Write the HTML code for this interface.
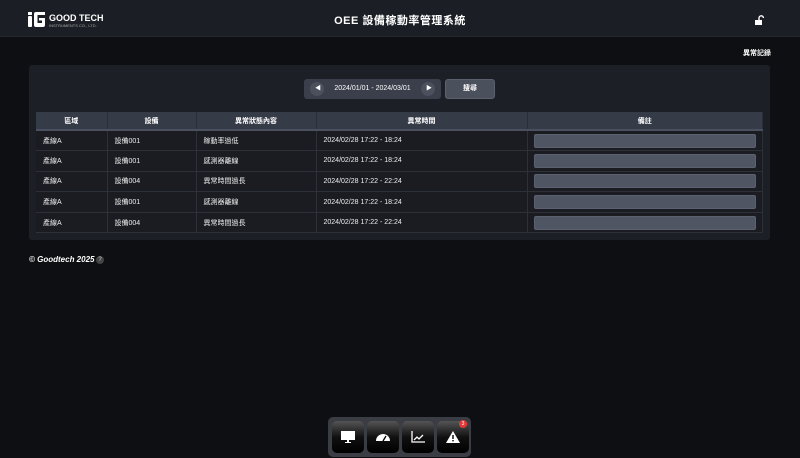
<!DOCTYPE html>
<html><head><meta charset="utf-8"><style>
*{margin:0;padding:0;box-sizing:border-box}
body{width:800px;height:458px;background:#0e0f12;font-family:"Liberation Sans","Noto Sans CJK TC",sans-serif;color:#fff;position:relative;overflow:hidden}
.hdr{position:absolute;left:0;top:0;width:800px;height:37px;background:#1b1e24;border-bottom:1px solid #23262c}
.title{position:absolute;left:0;width:800px;top:12px;text-align:center;font-size:11px;font-weight:bold;letter-spacing:0.5px}
.panel{position:absolute;left:29px;top:65px;width:741px;height:175px;background:#1c1f25;border-radius:3px}
table{position:absolute;left:36px;top:112px;width:727px;border-collapse:collapse;font-size:7px}
th{background:#363b48;height:18px;font-weight:bold;border-right:1px solid #2a2e37;border-bottom:2px solid #4a5060}
td{height:20.6px;border:1px solid #2c3038;border-left:none;padding-left:7px;background:#1a1c21;font-weight:normal;color:#eee}
td:last-child{padding:0 6px}
.inp{height:14px;background:#4f5563;border-radius:2px;border:1px solid #5b6170}
.dock{position:absolute;left:328px;top:417px;width:143px;height:40px;background:#3a3d43;border-radius:5px}
.btn{position:absolute;top:4px;width:32px;height:32px;border-radius:5px;background:linear-gradient(#555,#111 50%,#000);display:flex;align-items:center;justify-content:center}
</style></head><body>
<div class="hdr">
 <svg style="position:absolute;left:28px;top:11px" width="17" height="17" viewBox="0 0 17 17"><rect x="0" y="1" width="4" height="3" rx="0.5" fill="#fff"/><rect x="0" y="5" width="4" height="11" rx="1" fill="#fff"/><path d="M8 1h9v3H9.5v8h4.5V9.5h-3V7h6v7a2 2 0 0 1-2 2H8a2 2 0 0 1-2-2V3a2 2 0 0 1 2-2z" fill="#fff"/></svg>
 <div style="position:absolute;left:49px;top:13px;font-size:9px;font-weight:bold">GOOD TECH</div>
 <div style="position:absolute;left:49px;top:23px;font-size:4px;color:#aaa">INSTRUMENTS CO., LTD.</div>
 <div class="title">OEE 設備稼動率管理系統</div>
 <svg style="position:absolute;left:755px;top:15px" width="10" height="10" viewBox="0 0 10 10"><path d="M4 5V3a2.2 2.2 0 0 1 4.4 0" stroke="#fff" stroke-width="1.4" fill="none"/><rect x="0" y="5" width="7" height="5" fill="#fff"/></svg>
</div>
<div style="position:absolute;left:743px;top:48px;font-size:7px;font-weight:bold">異常記錄</div>
<div class="panel"></div>
<div style="position:absolute;left:304px;top:79px;width:137px;height:20px;background:#3a3f4b;border-radius:3px;font-size:7px;line-height:20px;text-align:center">2024/01/01 - 2024/03/01
 <div style="position:absolute;left:6px;top:3px;width:14px;height:14px;border-radius:50%;background:#4a505c"></div><span style="position:absolute;left:11px;top:0;font-size:6px">◀</span>
 <div style="position:absolute;left:117px;top:3px;width:14px;height:14px;border-radius:50%;background:#4a505c"></div><span style="position:absolute;left:122px;top:0;font-size:6px">▶</span>
</div>
<div style="position:absolute;left:445px;top:79px;width:50px;height:20px;background:#4b505d;border-radius:3px;border:1px solid #5a606d;font-size:7px;line-height:18px;text-align:center;font-weight:bold">搜尋</div>
<table>
<tr><th style="width:71px">區域</th><th style="width:89px">設備</th><th style="width:120px">異常狀態內容</th><th style="width:211px">異常時間</th><th>備註</th></tr>
<tr><td>產線A</td><td>設備001</td><td>稼動率過低</td><td>2024/02/28 17:22 - 18:24</td><td><div class="inp"></div></td></tr>
<tr><td>產線A</td><td>設備001</td><td>感測器離線</td><td>2024/02/28 17:22 - 18:24</td><td><div class="inp"></div></td></tr>
<tr><td>產線A</td><td>設備004</td><td>異常時間過長</td><td>2024/02/28 17:22 - 22:24</td><td><div class="inp"></div></td></tr>
<tr><td>產線A</td><td>設備001</td><td>感測器離線</td><td>2024/02/28 17:22 - 18:24</td><td><div class="inp"></div></td></tr>
<tr><td>產線A</td><td>設備004</td><td>異常時間過長</td><td>2024/02/28 17:22 - 22:24</td><td><div class="inp"></div></td></tr>
</table>
<div style="position:absolute;left:29px;top:255px;font-size:8px;font-style:italic;font-weight:bold">© Goodtech 2025</div>
<div style="position:absolute;left:96px;top:256px;width:8px;height:8px;border-radius:50%;background:#444;font-size:6px;text-align:center;line-height:8px;color:#ccc">?</div>
<div class="dock">
 <div class="btn" style="left:4px"><svg width="14" height="12" viewBox="0 0 14 12"><rect x="0" y="0" width="14" height="9" fill="#fff"/><rect x="6" y="9" width="2" height="2" fill="#fff"/><rect x="4" y="11" width="6" height="1" fill="#fff"/></svg></div>
 <div class="btn" style="left:39px"><svg width="14" height="10" viewBox="0 0 14 10"><path d="M0 9A7 7 0 0 1 14 9z" fill="#fff"/><path d="M7 9L10 4" stroke="#000" stroke-width="1.3"/></svg></div>
 <div class="btn" style="left:74px"><svg width="14" height="12" viewBox="0 0 14 12"><path d="M1 0v11h13" stroke="#fff" stroke-width="1.3" fill="none"/><path d="M3 9l3-3 2 2 4-4" stroke="#fff" stroke-width="1.3" fill="none"/></svg></div>
 <div class="btn" style="left:109px"><svg width="14" height="12" viewBox="0 0 14 12"><path d="M7 0L14 12H0z" fill="#fff"/><rect x="6.3" y="4" width="1.4" height="4" fill="#000"/><rect x="6.3" y="9" width="1.4" height="1.4" fill="#000"/></svg></div>
 <div style="position:absolute;left:131px;top:3px;width:8px;height:8px;border-radius:50%;background:#e03a3a;font-size:5px;line-height:8px;text-align:center">3</div>
</div>
</body></html>
